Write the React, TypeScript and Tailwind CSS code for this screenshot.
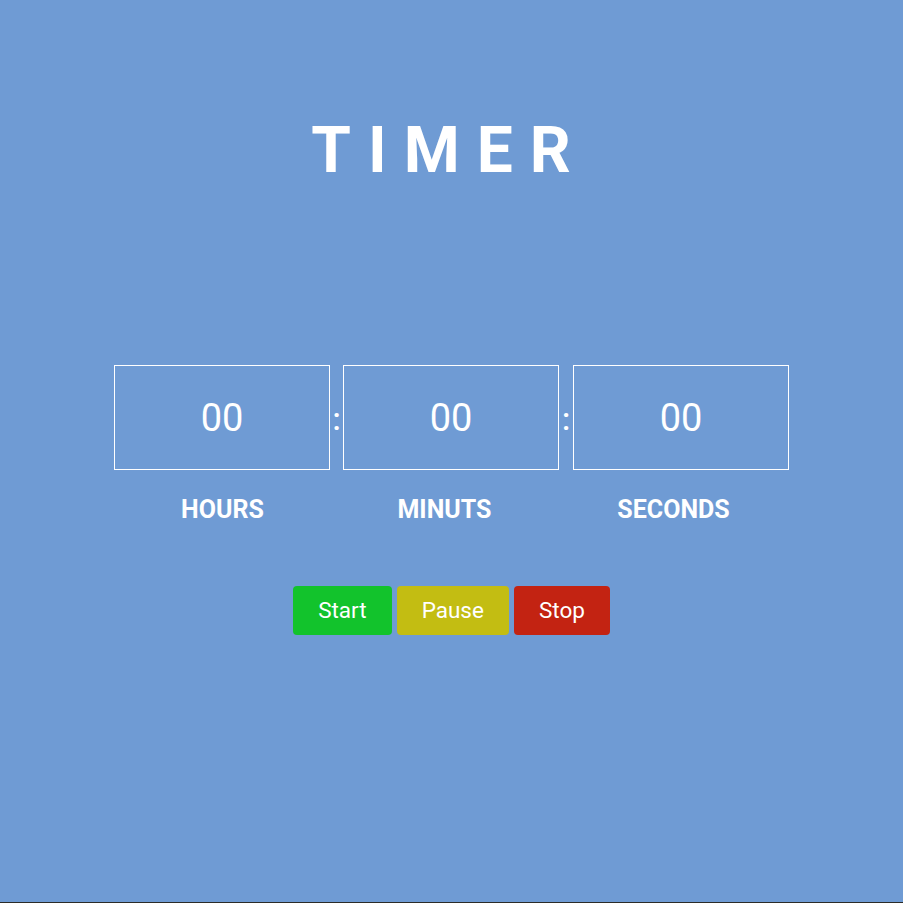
const boxes = ['HOURS', 'MINUTS', 'SECONDS']

function TimeBox() {
  return (
    <div className="w-[216px] h-[105px] border border-white flex items-center justify-center">
      <span className="text-[38px] leading-none text-white">00</span>
    </div>
  )
}

function Colon({ w }: { w: string }) {
  return (
    <div className={`${w} flex items-center justify-center text-[31px] leading-none font-medium text-white pt-[3px]`}>
      :
    </div>
  )
}

export default function App() {
  return (
    <div className="font-['Roboto',sans-serif]">
      <div className="h-[902px] bg-[#6f9bd4] flex flex-col items-center">
        <h1 className="mt-[119px] pr-[4px] text-[64px] leading-none font-bold text-white tracking-[17px]">
          TIMER
        </h1>

        <div className="mt-[182px] flex">
          <TimeBox />
          <Colon w="w-[13px]" />
          <TimeBox />
          <Colon w="w-[14px]" />
          <TimeBox />
        </div>

        {/* labels */}
        <div className="mt-[27px] flex text-[25px] leading-none font-bold text-white">
          <div className="w-[216px] text-center">{boxes[0]}</div>
          <div className="w-[228px] text-center">{boxes[1]}</div>
          <div className="w-[230px] text-center">{boxes[2]}</div>
        </div>

        <div className="mt-[64px] flex gap-[5px] text-[22.5px] text-white">
          <button className="h-[49px] px-[25px] rounded-[4px] bg-[#12c32c]">Start</button>
          <button className="h-[49px] px-[25px] rounded-[4px] bg-[#c3bd12]">Pause</button>
          <button className="h-[49px] px-[25px] rounded-[4px] bg-[#c32312]">Stop</button>
        </div>
      </div>
      <div className="h-[1px] bg-[#2b2b28]" />
    </div>
  )
}
